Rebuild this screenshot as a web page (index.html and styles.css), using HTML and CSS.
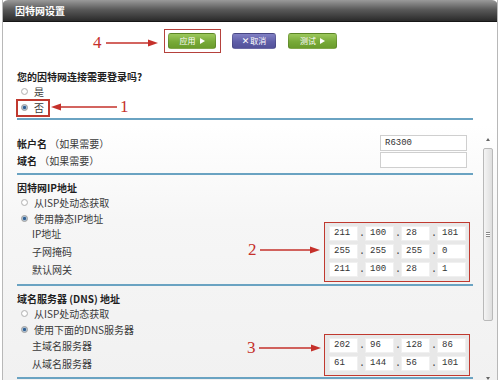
FILE: index.html
```html
<!DOCTYPE html>
<html lang="zh-CN">
<head>
    <meta charset="UTF-8">
    <title>因特网设置</title>
    <link rel="stylesheet" href="styles.css">
</head>
<body>
    <div class="window">
        <div class="titlebar">因特网设置</div>

        <div class="toolbar">
            <div class="hl">
                <button class="btn btn-green">应用 <span class="tri"></span></button>
            </div>
            <button class="btn btn-purple"><span class="x">✕</span>取消</button>
            <button class="btn btn-green btn-test">测试 <span class="tri"></span></button>
        </div>

        <div class="question">
            <div class="q-title">您的因特网连接需要登录吗?</div>
            <div class="opt opt-yes"><span class="radio"></span>是</div>
            <div class="opt-box"><span class="radio checked"></span>否</div>
        </div>
        <div class="divider"></div>

        <div class="scroll">
            <div class="content">
                <div class="acc-row acc-first">
                    <span><b>帐户名</b> （如果需要）</span>
                    <div class="text-input">R6300</div>
                </div>
                <div class="acc-row">
                    <span><b>域名</b> （如果需要）</span>
                    <div class="text-input"></div>
                </div>
                <div class="divider inner"></div>

                <div class="sec-title">因特网IP地址</div>
                <div class="opt row"><span class="radio"></span>从ISP处动态获取</div>
                <div class="opt row"><span class="radio checked"></span>使用静态IP地址</div>
                <div class="ipblock ip-static">
                    <div class="sub-labels">
                        <div>IP地址</div>
                        <div>子网掩码</div>
                        <div>默认网关</div>
                    </div>
                    <div class="ipbox">
                        <div class="ip-row"><span class="oct">211</span><span class="dot">.</span><span class="oct">100</span><span class="dot">.</span><span class="oct">28</span><span class="dot">.</span><span class="oct">181</span></div>
                        <div class="ip-row"><span class="oct">255</span><span class="dot">.</span><span class="oct">255</span><span class="dot">.</span><span class="oct">255</span><span class="dot">.</span><span class="oct">0</span></div>
                        <div class="ip-row"><span class="oct">211</span><span class="dot">.</span><span class="oct">100</span><span class="dot">.</span><span class="oct">28</span><span class="dot">.</span><span class="oct">1</span></div>
                    </div>
                </div>
                <div class="divider inner after-ip"></div>

                <div class="sec-title">域名服务器 (DNS) 地址</div>
                <div class="opt row"><span class="radio"></span>从ISP处动态获取</div>
                <div class="opt row"><span class="radio checked"></span>使用下面的DNS服务器</div>
                <div class="ipblock ip-dns">
                    <div class="sub-labels">
                        <div>主域名服务器</div>
                        <div>从域名服务器</div>
                    </div>
                    <div class="ipbox">
                        <div class="ip-row"><span class="oct">202</span><span class="dot">.</span><span class="oct">96</span><span class="dot">.</span><span class="oct">128</span><span class="dot">.</span><span class="oct">86</span></div>
                        <div class="ip-row"><span class="oct">61</span><span class="dot">.</span><span class="oct">144</span><span class="dot">.</span><span class="oct">56</span><span class="dot">.</span><span class="oct">101</span></div>
                    </div>
                </div>
                <div class="divider inner after-dns"></div>
            </div>

            <div class="scrollbar">
                <div class="sb-btn"><span class="arr-up"></span></div>
                <div class="sb-thumb"><span class="grip"></span></div>
                <div class="sb-track"></div>
                <div class="sb-btn"><span class="arr-down"></span></div>
            </div>
        </div>

        <!-- annotations -->
        <div class="note note-4">
            <span class="num">4</span>
            <svg width="52" height="10"><path d="M0 5H44" stroke="#c5302a" stroke-width="1.4"/><path d="M52 5L42 1.5V8.5Z" fill="#c5302a"/></svg>
        </div>
        <div class="note note-1">
            <svg width="66" height="10"><path d="M8 5H66" stroke="#c5302a" stroke-width="1.4"/><path d="M0 5L10 1.5V8.5Z" fill="#c5302a"/></svg>
            <span class="num">1</span>
        </div>
        <div class="note note-2">
            <span class="num">2</span>
            <svg width="60" height="10"><path d="M0 5H52" stroke="#c5302a" stroke-width="1.4"/><path d="M60 5L50 1.5V8.5Z" fill="#c5302a"/></svg>
        </div>
        <div class="note note-3">
            <span class="num">3</span>
            <svg width="62" height="10"><path d="M0 5H54" stroke="#c5302a" stroke-width="1.4"/><path d="M62 5L52 1.5V8.5Z" fill="#c5302a"/></svg>
        </div>
    </div>
</body>
</html>
```

FILE: styles.css
```css
* {
    margin: 0;
    padding: 0;
    box-sizing: border-box;
}

body {
    font-family: "Noto Sans CJK SC", "DejaVu Sans", sans-serif;
    font-size: 10px;
    color: #3a3a3a;
    background: #fff;
    width: 500px;
    height: 380px;
    overflow: hidden;
}

.window {
    position: relative;
    margin: 0 2px;
    height: 380px;
    border-left: 1px solid #b8b8b8;
    border-right: 1px solid #b8b8b8;
    background: linear-gradient(#fff 0, #fff 125px, #f6f6f6 220px, #f1f1f1 380px);
    overflow: hidden;
}

.titlebar {
    height: 22px;
    margin: 0 -1px;
    padding-left: 13px;
    border-radius: 6px 6px 0 0;
    border-bottom: 1px solid #161616;
    background: linear-gradient(#9a9a9a, #5a5a5a 45%, #2a2a2a);
    color: #fff;
    font-weight: bold;
    font-size: 10px;
    line-height: 21px;
}

/* buttons */
.toolbar {
    display: flex;
    align-items: center;
    padding: 7px 0 0 161px;
}

.hl {
    border: 1px solid #b5413c;
    padding: 2px 4px 3px 3px;
}

.btn {
    height: 16px;
    border: 1px solid rgba(0, 0, 0, 0.15);
    border-radius: 3px;
    color: #fff;
    font-family: inherit;
    font-size: 8px;
    display: inline-flex;
    align-items: center;
    justify-content: center;
    gap: 4px;
}

.btn-green {
    width: 48px;
    background: linear-gradient(#9cc85c, #78aa38 55%, #6a9c2c);
}

.btn-test {
    width: 49px;
    margin-left: 12px;
}

.btn-purple {
    width: 44px;
    margin-left: 11px;
    gap: 1px;
    background: linear-gradient(#8180c4, #5f5ea8 55%, #53529a);
}

.btn .x {
    font-size: 9px;
    font-weight: bold;
    font-family: "DejaVu Sans", sans-serif;
}

.tri {
    width: 0;
    height: 0;
    border-left: 5px solid #fff;
    border-top: 3px solid transparent;
    border-bottom: 3px solid transparent;
}

/* login question */
.question {
    padding: 0 14px;
    margin-top: 17px;
}

.q-title,
.sec-title {
    font-weight: bold;
    color: #1e1e1e;
}

.q-title {
    line-height: 14px;
}

.opt {
    display: flex;
    align-items: center;
    gap: 6px;
    padding-left: 4px;
}

.opt-yes {
    margin-top: 1px;
    height: 14px;
}

.opt.row {
    height: 16px;
}

.opt-box {
    display: inline-flex;
    align-items: center;
    gap: 6px;
    margin-left: -1px;
    height: 18px;
    padding: 0 4px 0 3px;
    border: 2px solid #c0392f;
}

.radio {
    width: 7px;
    height: 7px;
    border-radius: 50%;
    border: 1px solid #b4b4b4;
    background: radial-gradient(circle, #fff 40%, #e4e4e4);
}

.radio.checked {
    border-color: #9a9a9a;
    background: radial-gradient(circle, #2f5f93 35%, #a9bfd4 55%, #e6e6e6);
}

.divider {
    height: 2px;
    margin: 1px 24px 0 14px;
    background: #6aa3c2;
}

.divider.inner {
    margin: 4px 0 0;
}

.divider.after-ip {
    margin-top: 2px;
}

.divider.after-dns {
    margin-top: 1px;
}

/* scrolling form */
.scroll {
    display: flex;
    height: 268px;
}

.content {
    width: 470px;
    padding-left: 14px;
}

.acc-row {
    display: flex;
    justify-content: space-between;
    align-items: center;
    height: 17px;
}

.acc-first {
    margin-top: 15px;
}

.acc-row b {
    color: #1e1e1e;
}

.text-input {
    width: 87px;
    height: 16px;
    margin-right: 6px;
    padding-left: 4px;
    border: 1px solid #cfcfcf;
    background: #fff;
    font-family: "Liberation Mono", monospace;
    font-size: 9px;
    line-height: 14px;
    color: #333;
}

.sec-title {
    margin-top: 6px;
    line-height: 14px;
}

.ipblock {
    display: flex;
}

.ip-static {
    margin-top: -5px;
}

.ip-dns {
    margin-top: -4px;
}

.sub-labels {
    padding: 3px 0 0 15px;
}

.sub-labels div {
    height: 18px;
    line-height: 18px;
}

.ipbox {
    margin-left: auto;
    margin-right: 3px;
    padding: 2px 3px 2px 4px;
    border: 1.5px solid #c0392f;
    background: #e8e8e8;
}

.ip-row {
    display: flex;
    align-items: center;
    height: 18px;
}

.oct {
    width: 29px;
    height: 15px;
    padding-left: 4px;
    background: #fff;
    border: 1px solid #f0f0f0;
    font-family: "Liberation Mono", monospace;
    font-size: 9px;
    line-height: 13px;
    color: #333;
}

.dot {
    width: 7px;
    padding-left: 1px;
    font-family: "Liberation Mono", monospace;
    font-size: 10px;
    color: #444;
}

/* scrollbar */
.scrollbar {
    width: 10px;
    margin-left: 10px;
    padding-top: 12px;
    display: flex;
    flex-direction: column;
}

.sb-btn {
    height: 16px;
    display: flex;
    align-items: center;
    justify-content: center;
}

.arr-up,
.arr-down {
    width: 0;
    height: 0;
    border-left: 2.5px solid transparent;
    border-right: 2.5px solid transparent;
}

.arr-up {
    border-bottom: 3px solid #666;
}

.arr-down {
    border-top: 3px solid #666;
}

.sb-thumb {
    height: 173px;
    border: 1px solid #b9b9b9;
    border-radius: 2px;
    background: linear-gradient(90deg, #f4f4f4, #dedede);
    display: flex;
    align-items: center;
    justify-content: center;
}

.grip {
    width: 4px;
    height: 5px;
    border-top: 1px solid #888;
    border-bottom: 1px solid #888;
    background: linear-gradient(#fff 40%, #888 40%, #888 60%, #fff 60%);
}

.sb-track {
    height: 50px;
}

/* red annotations */
.note {
    position: absolute;
    display: flex;
    align-items: center;
    height: 18px;
    gap: 3px;
}

.num {
    font-family: "Liberation Serif", serif;
    font-size: 17px;
    line-height: 18px;
    color: #c5302a;
}

.note-4 {
    left: 90px;
    top: 34px;
    gap: 4px;
}

.note-1 {
    left: 48px;
    top: 98px;
}

.note-2 {
    left: 245px;
    top: 241px;
}

.note-3 {
    left: 244px;
    top: 339px;
}
```
